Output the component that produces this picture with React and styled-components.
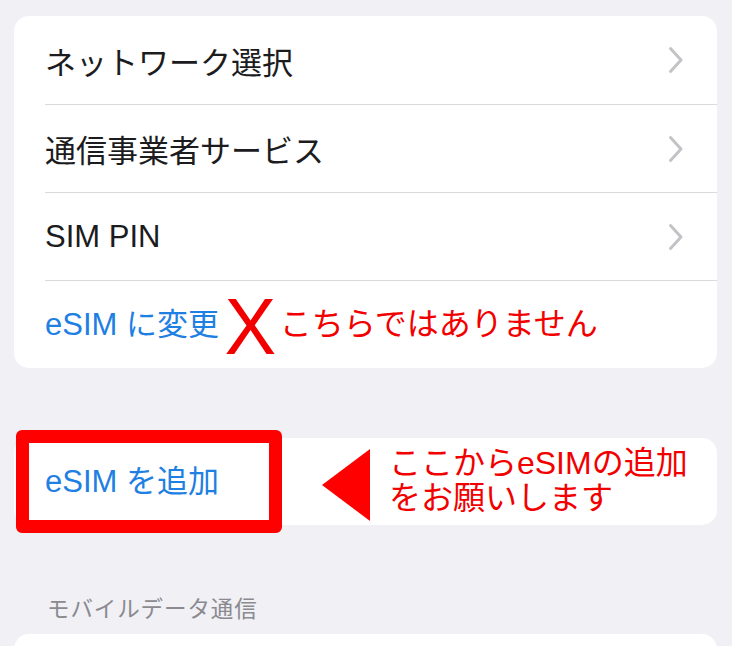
import React from "react";
import styled, { createGlobalStyle } from "styled-components";

const Global = createGlobalStyle`
  html, body { margin: 0; padding: 0; background: #f0f0f5; }
  body { font-family: "Liberation Sans", "Noto Sans CJK JP", sans-serif; -webkit-font-smoothing: antialiased; }
`;

const Page = styled.div`
  width: 732px;
  height: 646px;
  overflow: hidden;
  box-sizing: border-box;
  padding: 16px 15px 0 14px;
  display: flex;
  flex-direction: column;
  background: #f0f0f5;
`;

const Card = styled.div`
  position: relative;
  background: #fff;
  border-radius: 15px;
  margin-top: ${(p) => p.$top || 0}px;
  display: flex;
  flex-direction: column;
  flex-shrink: 0;
`;

const Row = styled.div`
  height: 88px;
  display: flex;
  align-items: center;
  margin-left: 31px;
  padding-right: 33px;
  box-sizing: border-box;
  border-top: ${(p) => (p.$first ? "none" : "1.5px solid #dadade")};
`;

const Label = styled.span`
  flex: 1;
  font-family: "Noto Sans CJK JP", sans-serif;
  font-size: 31px;
  color: #1c1c1e;
  line-height: 1;
`;

const LatinLabel = styled(Label)`
  font-family: "Liberation Sans", "Noto Sans CJK JP", sans-serif;
`;

const BlueLabel = styled.span`
  flex: none;
  font-family: "Liberation Sans", "Noto Sans CJK JP", sans-serif;
  font-size: 31px;
  color: #1f80e3;
  line-height: 1;
`;

const Chevron = () => (
  <svg width="16" height="28" viewBox="0 0 16 28" fill="none">
    <path d="M2.5 2.5 L13 14 L2.5 25.5" stroke="#c3c3c7" strokeWidth="3" strokeLinecap="round" strokeLinejoin="round" />
  </svg>
);

const Cross = styled.span`
  font-family: "Liberation Sans", Arial, sans-serif;
  font-size: 79px;
  line-height: 1;
  color: #f20000;
  margin-left: 5px;
  display: inline-block;
  transform: scaleX(0.98);
  margin-top: 4px;
`;

const Note = styled.span`
  font-family: "Liberation Sans", "Noto Sans CJK JP", sans-serif;
  font-size: ${(p) => p.$size || 32}px;
  color: #f20000;
  line-height: 35px;
  margin-left: ${(p) => p.$ml || 0}px;
`;

const Highlight = styled.div`
  position: absolute;
  left: 2px;
  top: -8px;
  width: 266px;
  height: 103px;
  box-sizing: border-box;
  border: 13px solid #ff0000;
  border-radius: 6px;
`;

const Triangle = styled.div`
  width: 0;
  height: 0;
  border-top: 36px solid transparent;
  border-bottom: 36px solid transparent;
  border-right: 48px solid #ff0000;
  margin-left: 103px;
  margin-top: 6px;
  flex: none;
`;

const AddRow = styled.div`
  height: 87px;
  display: flex;
  align-items: center;
  padding-left: 31px;
`;

const NoteBlock = styled.div`
  margin-left: 19px;
  margin-top: -2px;
`;

const SectionHeader = styled.div`
  margin-top: 67px;
  padding-left: 33px;
  font-family: "Noto Sans CJK JP", sans-serif;
  font-size: 22.5px;
  color: #8a8a8f;
  line-height: 30px;
  letter-spacing: 0.9px;
`;

export default function App() {
  return (
    <>
      <Global />
      <Page>
        <Card>
          <Row $first>
            <Label>ネットワーク選択</Label>
            <Chevron />
          </Row>
          <Row>
            <Label>通信事業者サービス</Label>
            <Chevron />
          </Row>
          <Row>
            <LatinLabel>SIM PIN</LatinLabel>
            <Chevron />
          </Row>
          <Row>
            <BlueLabel>eSIM に変更</BlueLabel>
            <Cross>X</Cross>
            <Note $ml={3}>こちらではありません</Note>
          </Row>
        </Card>

        <Card $top={70}>
          <AddRow>
            <BlueLabel>eSIM を追加</BlueLabel>
            <Triangle />
            <NoteBlock>
              <Note>
                ここからeSIMの追加
                <br />
                をお願いします
              </Note>
            </NoteBlock>
          </AddRow>
          <Highlight />
        </Card>

        <SectionHeader>モバイルデータ通信</SectionHeader>
        <Card $top={12}>
          <Row $first />
        </Card>
      </Page>
    </>
  );
}
